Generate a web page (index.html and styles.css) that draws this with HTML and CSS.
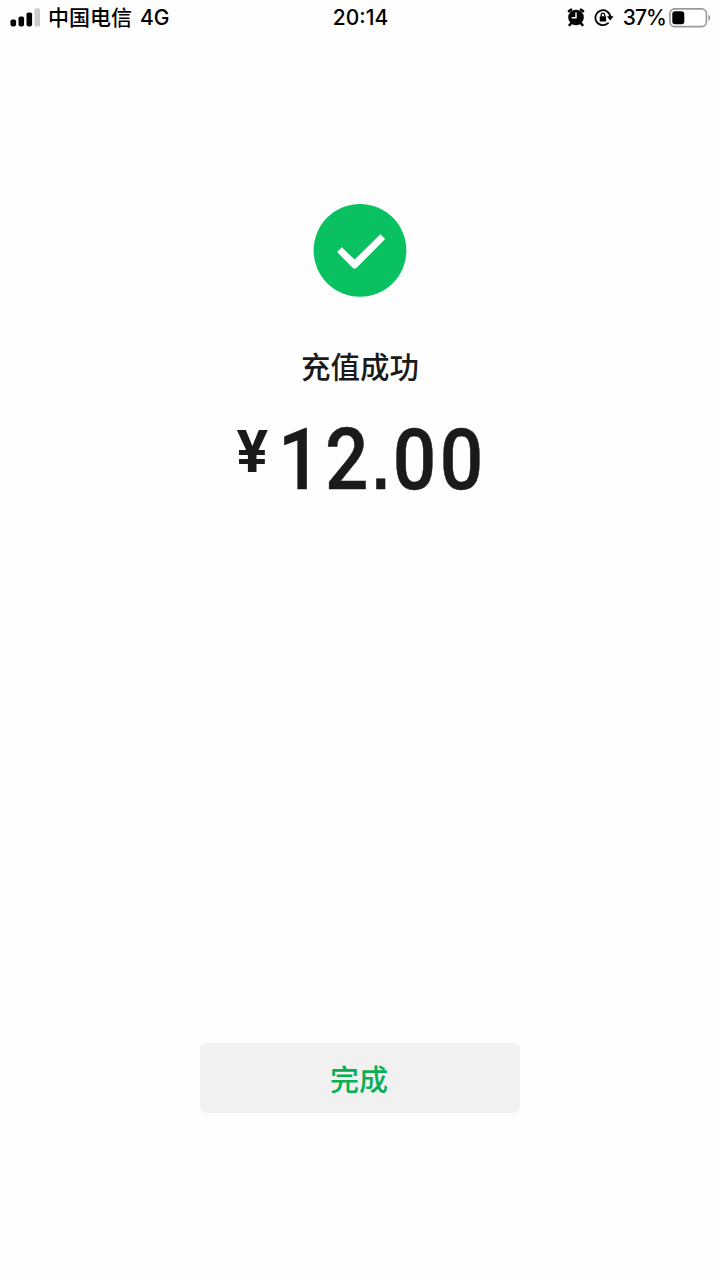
FILE: index.html
```
<!DOCTYPE html>
<html lang="zh-CN">
<head>
  <meta charset="UTF-8" />
  <meta name="viewport" content="width=device-width, initial-scale=1" />
  <title>充值成功</title>
  <link rel="stylesheet" href="styles.css">
</head>
<body>
  <header class="status-bar">
    <div class="status-left">
      <svg class="signal" width="30" height="19" viewBox="0 0 30 19">
        <rect x="0.5" y="11.4" width="5.6" height="7" rx="1.8" />
        <rect x="8.5" y="8.4" width="5.6" height="10" rx="1.8" />
        <rect x="16.5" y="4.4" width="5.6" height="14" rx="1.8" />
        <rect x="24.5" y="0.2" width="5.5" height="18.2" rx="1.5" fill="#ccc" />
      </svg>
      <span class="carrier">中国电信</span>
      <span class="network">4G</span>
    </div>
    <div class="status-time">20:14</div>
    <div class="status-right">
      <svg class="alarm" width="18" height="19" viewBox="0 0 18 19">
        <circle cx="9" cy="9.5" r="7.8" />
        <path d="M2 3.2 L4 1.7 M16 3.2 L14 1.7 M4.4 15 L2.6 17 M13.6 15 L15.4 17" stroke="#000" stroke-width="2.6" stroke-linecap="round" />
        <path d="M9 5 V9.8 H5.2" fill="none" stroke="#fff" stroke-width="1.4" stroke-linecap="round" />
      </svg>
      <svg class="lock" width="20" height="19" viewBox="0 0 20 19">
        <path d="M14 15.2 A7.5 7.5 0 1 1 16.4 9" fill="none" stroke="#000" stroke-width="1.8" stroke-linecap="round" />
        <path d="M12.9 8.3 H19.5 L16.2 12.4 Z" />
        <rect x="5.7" y="8.2" width="6.4" height="5.4" rx="0.6" />
        <path d="M7.1 8.6 V6.9 a1.8 1.8 0 0 1 3.6 0 V8.6" fill="none" stroke="#000" stroke-width="1.3" />
      </svg>
      <span class="percent">37%</span>
      <svg class="battery" width="42" height="20" viewBox="0 0 42 20">
        <rect x="0.9" y="0.9" width="36.5" height="17.7" rx="4.6" fill="#fff" stroke="#999" stroke-width="1.6" />
        <rect x="3.3" y="3.3" width="12" height="13" rx="2.8" />
        <path d="M39.4 6.8 C41.7 7.7 41.7 11.8 39.4 12.7 Z" fill="#999" />
      </svg>
    </div>
  </header>

  <main class="result">
    <svg class="success-icon" width="94" height="94" viewBox="0 0 94 94">
      <circle cx="47" cy="47.4" r="46.4" fill="#09c160" />
      <path d="M24.1 49 L28.8 44.3 L41.6 56.6 L67.4 31.3 L72.1 36.1 L43.8 64.6 Q41.6 66.8 39.4 64.6 Z" fill="#fff" />
    </svg>
    <h1 class="title">充值成功</h1>
    <div class="amount">
      <span class="currency">¥</span>
      <span class="value">12<span class="point">.</span>00</span>
    </div>
  </main>

  <footer class="actions">
    <button class="done-btn" type="button">完成</button>
  </footer>
</body>
</html>
```

FILE: styles.css
```
* {
  margin: 0;
  padding: 0;
  box-sizing: border-box;
}
body {
  display: flex;
  flex-direction: column;
  height: 1280px;
  background: #fefefe;
  color: #1a1a1a;
  font-family: "Noto Sans CJK SC", sans-serif;
}
.status-bar {
  display: grid;
  grid-template-columns: 1fr auto 1fr;
  align-items: center;
  height: 35px;
  padding: 0 9px 0 10px;
  color: #000;
  font-family: Inter, "Noto Sans CJK SC", sans-serif;
  font-size: 21px;
  font-weight: 500;
  line-height: 35px;
}
.status-left,
.status-right {
  display: flex;
  align-items: center;
  height: 35px;
}
.status-right {
  justify-content: flex-end;
}
.carrier {
  height: 35px;
  margin-left: 8px;
  font-family: "Noto Sans CJK SC", sans-serif;
  line-height: 33px;
}
.network {
  margin-left: 8px;
}
.lock {
  margin-left: 9px;
}
.percent {
  margin: 0 3px 0 9px;
  letter-spacing: -0.9px;
}
.result {
  display: flex;
  flex: 1;
  flex-direction: column;
  align-items: center;
  padding-top: 168px;
}
.title {
  margin-top: 46px;
  font-size: 29.5px;
  font-weight: 500;
  line-height: 44px;
}
.amount {
  display: flex;
  align-items: flex-start;
  margin-top: 22px;
  font-family: Roboto, sans-serif;
  line-height: 102px;
}
.currency {
  margin-right: 10px;
  font-size: 59px;
  font-weight: 700;
  line-height: 85px;
}
/* condensed a little so the digits look like DIN */
.value {
  margin-right: -27px;
  font-size: 85px;
  font-weight: 500;
  letter-spacing: 4px;
  transform: scaleX(0.9);
  transform-origin: left;
  -webkit-text-stroke: 0.5px #1a1a1a;
}
.point {
  font-family: "Liberation Sans", sans-serif;
  font-size: 68px;
  font-weight: 700;
  line-height: 1;
}
.actions {
  display: flex;
  justify-content: center;
  padding-bottom: 167px;
}
.done-btn {
  width: 320px;
  height: 70px;
  padding: 0 2px 1px 0;
  border: none;
  border-radius: 7px;
  background: #f1f1f1;
  color: #09ae57;
  font-family: "Noto Sans CJK SC", sans-serif;
  font-size: 29px;
  font-weight: 500;
}
```
